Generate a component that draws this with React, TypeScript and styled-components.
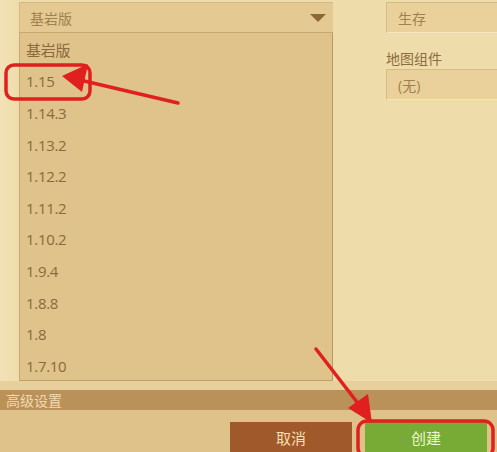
import React from "react";
import styled, { createGlobalStyle } from "styled-components";

const GlobalStyle = createGlobalStyle`
  html, body {
    margin: 0;
    padding: 0;
    width: 497px;
    height: 452px;
    overflow: hidden;
    background: #f0dcab;
    font-family: "Open Sans", "Noto Sans CJK SC", sans-serif;
  }
`;

const Page = styled.div`
  position: relative;
  width: 497px;
  height: 452px;
  display: flex;
  flex-direction: column;
  background: linear-gradient(90deg, #f3e2b7 0px, #efdcab 19px);
`;

const Top = styled.div`
  display: flex;
  padding-top: 2px;
  height: 379px;
`;

const LeftCol = styled.div`
  margin-left: 19px;
  width: 314px;
  display: flex;
  flex-direction: column;
`;

const Select = styled.div`
  height: 31px;
  flex-shrink: 0;
  box-sizing: border-box;
  display: flex;
  align-items: center;
  justify-content: space-between;
  padding: 0 7px 0 10px;
  background: #e4c992;
  border-top: 1px solid #d6b87c;
  border-left: 1px solid #d6b87c;
  border-bottom: 1px solid #c8a96c;
  color: #a2814f;
  font-size: 14px;
`;

const Caret = styled.span`
  width: 0;
  height: 0;
  border-left: 8px solid transparent;
  border-right: 8px solid transparent;
  border-top: 8px solid #8a6838;
`;

const List = styled.div`
  flex: 1;
  min-height: 0;
  overflow: hidden;
  display: flex;
  flex-direction: column;
  padding: 1px 0 0 6px;
  background: #dfc38a;
  border-left: 1px solid #c9ab70;
  border-right: 1px solid #b49a6c;
  border-bottom: 1px solid #c0a06a;
`;

const Item = styled.div`
  height: 31.6px;
  flex-shrink: 0;
  display: flex;
  align-items: center;
  color: #8a6a3c;
  font-size: 15px;
  letter-spacing: -0.3px;
`;

const RightCol = styled.div`
  margin-left: 53px;
  flex: 1;
  display: flex;
  flex-direction: column;
`;

const Field = styled.div`
  height: 31px;
  box-sizing: border-box;
  display: flex;
  align-items: center;
  padding-left: 11px;
  background: #ead19b;
  border-top: 1px solid #d8bb82;
  border-left: 1px solid #d8bb82;
  border-bottom: 1px solid #f5e6c0;
  color: #a0804f;
  font-size: 14px;
`;

const Label = styled.div`
  margin-top: 15px;
  height: 21px;
  color: #8c6c40;
  font-size: 14px;
`;

const Band = styled.div`
  height: 11px;
  background: #e7d09c;
`;

const Bar = styled.div`
  height: 22px;
  display: flex;
  align-items: center;
  padding-left: 6px;
  background: #bb915a;
  color: #f0dab0;
  font-size: 14px;
`;

const Footer = styled.div`
  flex: 1;
  display: flex;
  justify-content: flex-end;
  align-items: flex-start;
  gap: 13px;
  padding: 12px 10px 0 0;
  background: #dfc28a;
`;

const Button = styled.div<{ $tone: "cancel" | "ok" }>`
  width: 122px;
  height: 30px;
  display: flex;
  align-items: center;
  justify-content: center;
  font-size: 15px;
  background: ${(p) => (p.$tone === "ok" ? "#78ab36" : "#a0592b")};
  color: ${(p) => (p.$tone === "ok" ? "#eef4d4" : "#f6dfb2")};
`;

const Marks = styled.svg`
  position: absolute;
  left: 0;
  top: 0;
  pointer-events: none;
`;

const versions = ["基岩版", "1.15", "1.14.3", "1.13.2", "1.12.2", "1.11.2", "1.10.2", "1.9.4", "1.8.8", "1.8", "1.7.10"];

export default function App() {
  return (
    <Page>
      <GlobalStyle />
      <Top>
        <LeftCol>
          <Select>
            基岩版
            <Caret />
          </Select>
          <List>
            {versions.map((v) => (
              <Item key={v}>{v}</Item>
            ))}
          </List>
        </LeftCol>
        <RightCol>
          <Field>生存</Field>
          <Label>地图组件</Label>
          <Field>(无)</Field>
        </RightCol>
      </Top>
      <Band />
      <Bar>高级设置</Bar>
      <Footer>
        <Button $tone="cancel">取消</Button>
        <Button $tone="ok">创建</Button>
      </Footer>
      <Marks width="497" height="452" viewBox="0 0 497 452">
        <g fill="none" stroke="#e0201e" strokeWidth="3.5" strokeLinecap="round">
          <rect x="6" y="65" width="84" height="34" rx="8" />
          <line x1="178" y1="103" x2="80" y2="80" />
          <line x1="316" y1="349" x2="360" y2="406" />
          <rect x="358" y="421" width="135" height="36" rx="9" />
        </g>
        <g fill="#e0201e">
          <polygon points="62,76 88,64 82,92" />
          <polygon points="372,423 348,408 368,394" />
        </g>
      </Marks>
    </Page>
  );
}
